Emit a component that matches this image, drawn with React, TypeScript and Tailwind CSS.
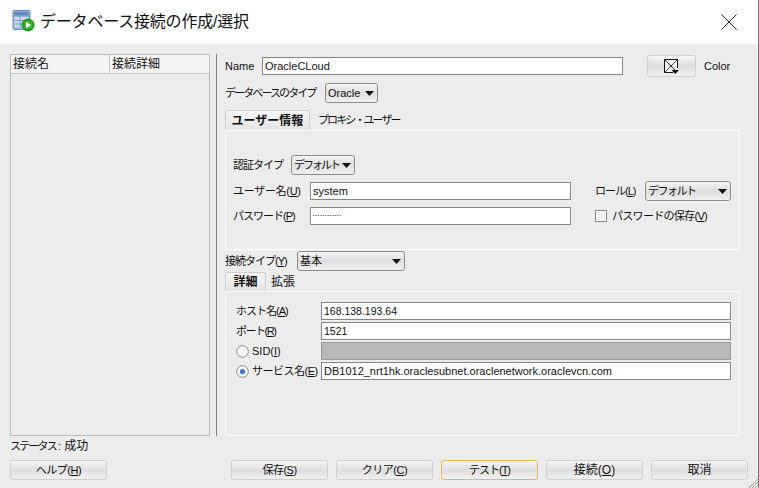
const Mn = ({ c }: { c: string }) => (
    <>(<span className="underline">{c}</span>)</>
);

const Arrow = () => (
    <svg width="9" height="5" viewBox="0 0 9 5" className="shrink-0">
        <path d="M0 0H9L4.5 5Z" fill="#111"/>
    </svg>
);

const Select = ({ text, className }: { text: string; className: string }) => (
    <div className={`flex items-center justify-between h-[20px] pl-[2px] pr-[3px] rounded-[3px] border border-[#8c8c8c] bg-linear-to-b from-[#f5f5f5] via-[#dedede] to-[#f0f0f0] whitespace-nowrap ${className}`}>
        <span>{text}</span>
        <Arrow/>
    </div>
);

const Input = ({ text, className }: { text?: string; className: string }) => (
    <div className={`flex items-center h-[18px] pl-[2px] bg-white border border-[#858585] leading-none whitespace-nowrap overflow-hidden ${className}`}>
        {text}
    </div>
);

const Btn = ({ children, className = "", focus = false }: { children: React.ReactNode; className?: string; focus?: boolean }) => (
    <div className={`flex items-center justify-center w-[97px] h-[20px] rounded-[3px] border ${focus ? "border-[#f0b550]" : "border-[#cfcfcf]"} bg-linear-to-b from-[#f6f6f6] via-[#dedede] to-[#f1f1f1] whitespace-nowrap ${className}`}>
        {children}
    </div>
);

const Radio = ({ on = false }: { on?: boolean }) => (
    <svg width="13" height="13" viewBox="0 0 13 13" className="shrink-0">
        <circle cx="6.5" cy="6.5" r="5.8" fill="#f6f6f6" stroke="#8a8a8a"/>
        {on && <circle cx="6.5" cy="6.5" r="2.6" fill="#3f79c9"/>}
    </svg>
);

const DbIcon = () => (
    <svg width="24" height="24" viewBox="0 0 24 24" className="shrink-0">
        <rect x="1" y="0.5" width="17" height="19" rx="1" fill="#8fb0db" stroke="#6d8fc0"/>
        <rect x="2.5" y="2" width="14" height="3.5" fill="#5f88c4"/>
        <path d="M2.5 7H16.5V17.5H2.5Z" fill="#cfdcf0"/>
        <path d="M2.5 10.5H16.5M2.5 14H16.5M8 7V17.5" stroke="#7f9fce" strokeWidth="1"/>
        <circle cx="16" cy="15" r="6.5" fill="#1f9a1f"/>
        <circle cx="16" cy="15" r="4.8" fill="#35b52d"/>
        <path d="M14 11.8L19.2 15L14 18.2Z" fill="#fff"/>
    </svg>
);

const ColorIcon = () => (
    <svg width="17" height="17" viewBox="0 0 17 17">
        <path d="M1.5 1.5H14.5V10M10 14.5H1.5V1.5" fill="#fff" stroke="#111"/>
        <path d="M1.5 1.5L14 14M14.5 1.5L2 14" stroke="#111" strokeWidth="0.8"/>
        <path d="M8.5 12H16L12.2 16Z" fill="#111"/>
    </svg>
);

const App = () => {
    return (
        <div className="relative w-[759px] h-[488px] overflow-hidden flex flex-col bg-[#ececec] text-[#111] text-[11px] border-r border-[#7a7a7a] font-['Liberation_Sans','Noto_Sans_CJK_JP',sans-serif]">
            {/* title bar */}
            <div className="flex items-center h-[44px] shrink-0 bg-white pl-[12px] pr-[21px]">
                <DbIcon/>
                <div className="ml-[4px] text-[16px] tracking-[-0.2px] flex-1">データベース接続の作成/選択</div>
                <svg width="16" height="16" viewBox="0 0 16 16">
                    <path d="M0.5 0.5L15.5 15.5M15.5 0.5L0.5 15.5" stroke="#222" strokeWidth="1"/>
                </svg>
            </div>

            <div className="flex h-[382px] shrink-0 mt-[10px] pl-[10px]">
                {/* connection list */}
                <div className="w-[200px] border border-[#bcbcbc] flex flex-col">
                    <div className="flex h-[19px] shrink-0 items-center bg-[#f4f4f4] border-b border-[#c4c4c4] text-[12px]">
                        <div className="w-[99px] pl-[2px] border-r border-[#c4c4c4]">接続名</div>
                        <div className="pl-[2px]">接続詳細</div>
                    </div>
                </div>

                <div className="w-px ml-[6px] bg-[#808080]"/>

                <div className="w-[515px] ml-[8px] flex flex-col">
                    <div className="flex items-center h-[22px] mt-px">
                        <div className="w-[37px]">Name</div>
                        <Input text="OracleCLoud" className="w-[361px]"/>
                        <div className="flex items-center justify-center w-[49px] h-[22px] ml-[24px] rounded-[3px] border border-[#d0d0d0] bg-linear-to-b from-[#f6f6f6] via-[#dcdcdc] to-[#f1f1f1]">
                            <ColorIcon/>
                        </div>
                        <div className="ml-[8px]">Color</div>
                    </div>

                    <div className="flex items-center mt-[6px]">
                        <div className="w-[100px] whitespace-nowrap tracking-[-1.9px]">データベースのタイプ</div>
                        <Select text="Oracle" className="w-[53px]"/>
                    </div>

                    {/* user info tabs */}
                    <div className="flex items-end h-[20px] mt-[7px]">
                        <div className="flex items-center justify-center w-[85px] h-[20px] rounded-t-[3px] border border-b-0 border-[#cfcfcf] bg-linear-to-b from-[#f6f6f6] to-[#e4e4e4] font-bold text-[12px]">ユーザー情報</div>
                        <div className="ml-[8px] h-[20px] flex items-center whitespace-nowrap tracking-[-1.9px]">プロキシ・ユーザー</div>
                    </div>
                    <div className="h-[120px] border border-white pt-[24px] pl-[7px]">
                        <div className="flex items-center">
                            <div className="w-[58px] whitespace-nowrap tracking-[-1px]">認証タイプ</div>
                            <Select text="デフォルト" className="w-[64px] tracking-[-2px]"/>
                        </div>
                        <div className="flex items-center mt-[6px] h-[20px]">
                            <div className="w-[77px] whitespace-nowrap tracking-[-0.3px]">ユーザー名<Mn c="U"/></div>
                            <Input text="system" className="w-[261px]"/>
                            <div className="ml-[24px] w-[50px] whitespace-nowrap tracking-[-1px]">ロール<Mn c="L"/></div>
                            <Select text="デフォルト" className="w-[86px] tracking-[-1.5px]"/>
                        </div>
                        <div className="flex items-center mt-[6px] h-[18px]">
                            <div className="w-[77px] whitespace-nowrap tracking-[-1px]">パスワード<Mn c="P"/></div>
                            <Input text="••••••••••••" className="w-[261px] text-[4px] tracking-[1px]"/>
                            <div className="ml-[24px] w-[12px] h-[12px] border border-[#8a8a8a] bg-[#f2f2f2]"/>
                            <div className="ml-[5px] whitespace-nowrap tracking-[-0.7px]">パスワードの保存<Mn c="V"/></div>
                        </div>
                    </div>

                    <div className="flex items-center mt-px">
                        <div className="w-[72px] whitespace-nowrap tracking-[-1px]">接続タイプ<Mn c="Y"/></div>
                        <Select text="基本" className="w-[108px]"/>
                    </div>

                    {/* connection detail tabs */}
                    <div className="flex items-end h-[19px] mt-px">
                        <div className="flex items-center justify-center w-[41px] h-[19px] rounded-t-[3px] border border-b-0 border-[#cfcfcf] bg-linear-to-b from-[#f6f6f6] to-[#e4e4e4] font-bold text-[12px]">詳細</div>
                        <div className="ml-[5px] h-[19px] flex items-center text-[12px]">拡張</div>
                    </div>
                    <div className="flex-1 border border-white pt-[10px] pl-[10px]">
                        <div className="flex items-center h-[18px]">
                            <div className="w-[85px] whitespace-nowrap tracking-[-1px]">ホスト名<Mn c="A"/></div>
                            <Input text="168.138.193.64" className="w-[410px] text-[10.5px]"/>
                        </div>
                        <div className="flex items-center h-[18px] mt-[2px]">
                            <div className="w-[85px] whitespace-nowrap tracking-[-1.5px]">ポート<Mn c="R"/></div>
                            <Input text="1521" className="w-[410px] text-[10.5px]"/>
                        </div>
                        <div className="flex items-center h-[18px] mt-[2px]">
                            <div className="w-[85px] flex items-center gap-[3px] whitespace-nowrap"><Radio/><span>SID<Mn c="I"/></span></div>
                            <div className="w-[410px] h-[18px] bg-[#b8b8b8] border border-[#9a9a9a]"/>
                        </div>
                        <div className="flex items-center h-[18px] mt-[2px]">
                            <div className="w-[85px] flex items-center gap-[3px] whitespace-nowrap tracking-[-0.5px]"><Radio on/><span>サービス名<Mn c="E"/></span></div>
                            <Input text="DB1012_nrt1hk.oraclesubnet.oraclenetwork.oraclevcn.com" className="w-[410px]"/>
                        </div>
                    </div>
                </div>
            </div>

            <div className="pl-[10px] h-[24px] shrink-0 pt-px whitespace-nowrap">
                <span className="tracking-[-1.8px]">ステータス</span><span className="ml-[2px]">: </span><span className="text-[12px]">成功</span>
            </div>

            <div className="flex items-center pl-[10px]">
                <Btn className="tracking-[-0.5px]">ヘルプ<Mn c="H"/></Btn>
                <div className="flex gap-[8px] ml-[124px]">
                    <Btn className="tracking-[-0.5px]">保存<Mn c="S"/></Btn>
                    <Btn className="tracking-[-0.5px]">クリア<Mn c="C"/></Btn>
                    <Btn focus className="tracking-[-1px]">テスト<Mn c="T"/></Btn>
                    <Btn className="text-[12px]">接続<Mn c="O"/></Btn>
                    <Btn className="text-[12px]">取消</Btn>
                </div>
            </div>

            {/* resize grip */}
            <svg width="9" height="9" viewBox="0 0 9 9" className="absolute right-0 bottom-0">
                <path d="M0 9L9 0M3 9L9 3M6 9L9 6" stroke="#a3a38f" strokeWidth="1"/>
            </svg>
        </div>
    );
};

export default App;
